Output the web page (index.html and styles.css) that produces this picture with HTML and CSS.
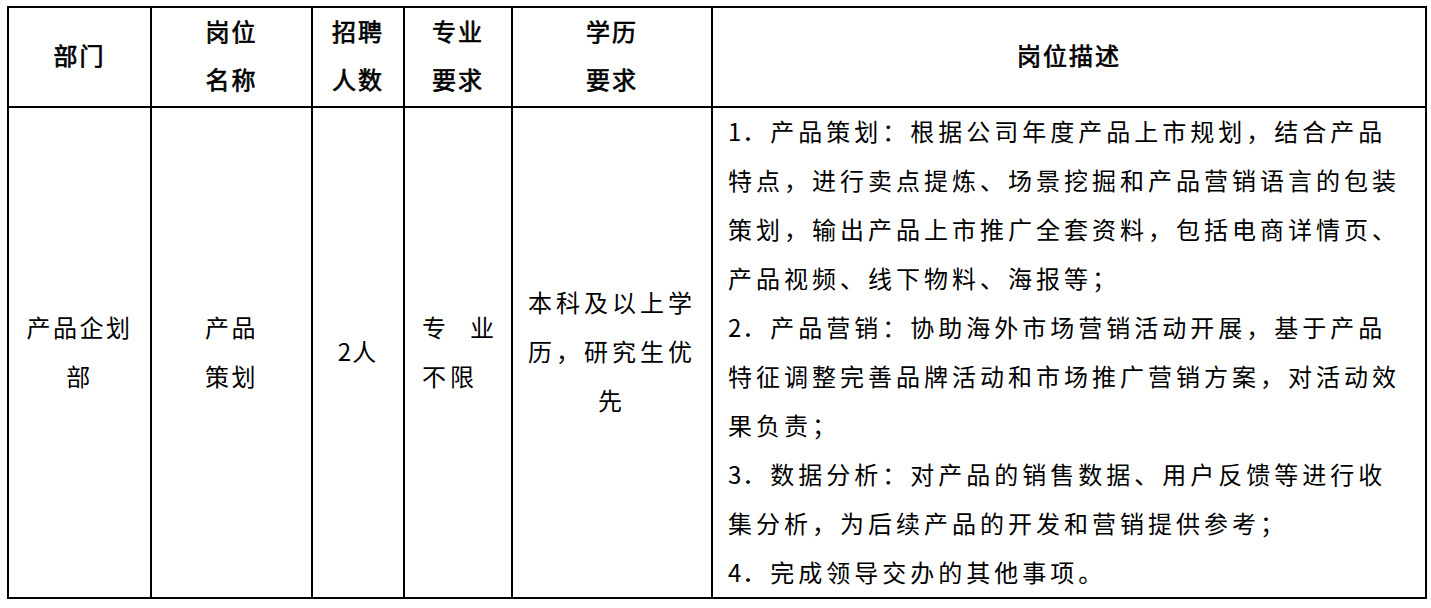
FILE: index.html
```html
<!DOCTYPE html>
<html lang="zh-CN">
<head>
<meta charset="utf-8">
<title>岗位描述</title>
<link rel="stylesheet" href="styles.css">
</head>
<body>
<div class="table">
  <div class="cell head"><div class="txt">部门</div></div>
  <div class="cell head"><div class="txt">岗位<br>名称</div></div>
  <div class="cell head"><div class="txt">招聘<br>人数</div></div>
  <div class="cell head"><div class="txt">专业<br>要求</div></div>
  <div class="cell head"><div class="txt">学历<br>要求</div></div>
  <div class="cell head"><div class="txt">岗位描述</div></div>

  <div class="cell body narrow"><div class="txt">产品企划<br>部</div></div>
  <div class="cell body narrow"><div class="txt">产品<br>策划</div></div>
  <div class="cell body count"><div class="txt"><span class="num">2</span>人</div></div>
  <div class="cell body major"><div class="txt">专业不限</div></div>
  <div class="cell body"><div class="txt">本科及以上学<br>历，研究生优<br>先</div></div>
  <div class="cell body desc">
    <div class="txt">
      <p><span class="num">1</span>．产品策划：根据公司年度产品上市规划，结合产品<br>特点，进行卖点提炼、场景挖掘和产品营销语言的包装<br>策划，输出产品上市推广全套资料，包括电商详情页、<br>产品视频、线下物料、海报等；</p>
      <p><span class="num">2</span>．产品营销：协助海外市场营销活动开展，基于产品<br>特征调整完善品牌活动和市场推广营销方案，对活动效<br>果负责；</p>
      <p><span class="num">3</span>．数据分析：对产品的销售数据、用户反馈等进行收<br>集分析，为后续产品的开发和营销提供参考；</p>
      <p><span class="num">4</span>．完成领导交办的其他事项。</p>
    </div>
  </div>
</div>
</body>
</html>
```

FILE: styles.css
```css
html, body {
  background: #ffffff;
}

body {
  margin: 0;
  padding: 6px 0 0 7px;
  font-family: "Noto Sans CJK SC", "Noto Sans", sans-serif;
  color: #000000;
}

.table {
  display: grid;
  grid-template-columns: 143px 161px 92px 108px 200px 714px;
  grid-template-rows: 100px 491px;
  width: 1420px;
  box-sizing: border-box;
  border-left: 2px solid #000;
  border-top: 2px solid #000;
}

.cell {
  box-sizing: border-box;
  border-right: 2px solid #000;
  border-bottom: 2px solid #000;
  display: flex;
  align-items: center;
  justify-content: center;
  padding-bottom: 4px;
  font-size: 24px;
  text-align: center;
  white-space: nowrap;
}

.head {
  font-weight: 400;
  -webkit-text-stroke: 0.7px #000;
  line-height: 48px;
  letter-spacing: 2px;
}

.body {
  font-weight: 400;
  line-height: 49px;
  letter-spacing: 4px;
}

.narrow {
  letter-spacing: 2.5px;
}

.count {
  letter-spacing: 2px;
}

.major {
  justify-content: flex-start;
  padding-left: 17px;
}

.major .txt {
  width: 76px;
  white-space: normal;
  text-align: justify;
  text-align-last: left;
}

.desc {
  align-items: flex-start;
  justify-content: flex-start;
  padding: 0 0 0 15px;
  text-align: left;
}

.desc .txt {
  margin-top: -2px;
}

.desc p {
  margin: 0;
}

.num {
  letter-spacing: 1px;
}
```
